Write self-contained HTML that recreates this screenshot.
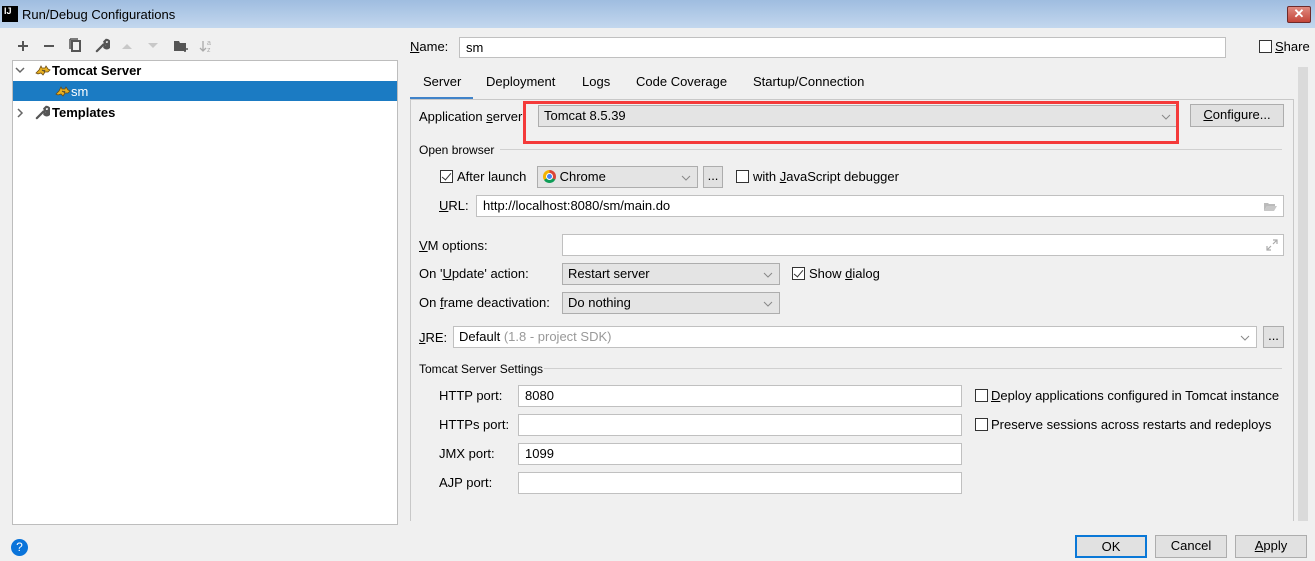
<!DOCTYPE html>
<html><head><style>
*{box-sizing:border-box;margin:0;padding:0}
body{width:1315px;height:561px;background:#f0f0f0;font-family:"Liberation Sans","Noto Sans CJK SC",sans-serif;font-size:13px;color:#000;position:relative;overflow:hidden}
.a{position:absolute}
.t{position:absolute;white-space:nowrap;line-height:16px}
.in{position:absolute;background:#fff;border:1px solid #c0c0c0;height:22px;padding-left:6px;line-height:20px}
.cb{position:absolute;background:#e4e4e4;border:1px solid #adadad;height:22px;padding-left:5px;line-height:20px}
.ar{position:absolute;right:6px;top:8px}
.btn{position:absolute;background:#e1e1e1;border:1px solid #adadad;text-align:center;line-height:20px;height:22px}
.chk{position:absolute;width:13px;height:13px;border:1px solid #333;background:#fff}
.chk.on::after{content:"";position:absolute;left:3px;top:0px;width:4px;height:8px;border:solid #333;border-width:0 1.5px 1.5px 0;transform:rotate(40deg)}
u{text-decoration:underline}
.gray{color:#999}
</style></head><body>
<svg width="0" height="0" style="position:absolute"><defs>
<symbol id="dd" viewBox="0 0 10 6"><path d="M1 1l4 4 4-4" fill="none" stroke="#888" stroke-width="1"/></symbol>
<symbol id="cat" viewBox="0 0 16 12"><path d="M1 9l3-3 2-4 1 2h3l1-2 2 3 2 1-2 2-3 0-2 3-2-2-3 1z" fill="#e8b020" stroke="#6b4a10" stroke-width=".8"/><path d="M7 6l2 1M10 6l-1 2" stroke="#333" stroke-width=".8"/></symbol>
<symbol id="wr" viewBox="0 0 16 16"><path d="M2 14l7-7M9 7a3.5 3.5 0 1 0 3-5l-2 2 1 2 2 1 2-2a3.5 3.5 0 0 1-5 5" fill="none" stroke="#555" stroke-width="2.4" stroke-linecap="round"/></symbol>
</defs></svg>
<div class="a" style="left:0;top:0;width:1315px;height:28px;background:linear-gradient(#9fbde0,#c3d7ee)"></div>
<div class="a" style="left:2px;top:6px;width:16px;height:16px;background:#000;color:#fff;font-size:9px;font-weight:bold;line-height:10px;padding-left:2px">IJ</div>
<div class="t" style="left:22px;top:7px;font-size:13px">Run/Debug Configurations</div>
<div class="a" style="left:1287px;top:6px;width:24px;height:17px;background:linear-gradient(#e08a80,#c4463a);border:1px solid #6e2a2a;border-radius:2px;color:#fff;font-weight:bold;text-align:center;line-height:14px;font-size:13px">✕</div>

<svg class="a" style="left:0;top:36px" width="220" height="20">
<path d="M18 10h10M23 5v10" stroke="#555" stroke-width="2"/>
<path d="M44 10h10" stroke="#555" stroke-width="2"/>
<rect x="72" y="5" width="8" height="10" fill="none" stroke="#555" stroke-width="2"/><path d="M70 3h8M70 3v10" stroke="#555" stroke-width="1.5"/>
<use href="#wr" x="95" y="2" width="15" height="15"/>
<path d="M122 13l5-5 5 5z" fill="#c8c8c8"/>
<path d="M148 7l5 5 5-5z" fill="#c8c8c8"/>
<path d="M174 5h5l1 2h6v8h-12z" fill="#555"/><path d="M182 13h6M185 10v6" stroke="#555" stroke-width="1.6"/>
<path d="M203 5v10M200 12l3 3 3-3" fill="none" stroke="#aaa" stroke-width="1.3"/><text x="207" y="9" font-size="7" fill="#aaa">a</text><text x="207" y="16" font-size="7" fill="#aaa">z</text>
</svg>

<div class="a" style="left:12px;top:60px;width:386px;height:465px;background:#fff;border:1px solid #bdbdbd"></div>
<div class="a" style="left:13px;top:81px;width:384px;height:20px;background:#1b7bc3"></div>
<svg class="a" style="left:15px;top:67px" width="10" height="7"><path d="M1 1l4 4 4-4" fill="none" stroke="#666" stroke-width="1.5"/></svg>
<svg class="a" style="left:35px;top:64px" width="16" height="12"><use href="#cat"/></svg>
<div class="t" style="left:52px;top:63px;font-weight:bold">Tomcat Server</div>
<svg class="a" style="left:55px;top:85px" width="16" height="12"><use href="#cat"/></svg>
<div class="t" style="left:71px;top:84px;color:#fff">sm</div>
<svg class="a" style="left:17px;top:108px" width="7" height="10"><path d="M1 1l4 4-4 4" fill="none" stroke="#666" stroke-width="1.5"/></svg>
<svg class="a" style="left:35px;top:105px" width="15" height="15"><use href="#wr"/></svg>
<div class="t" style="left:52px;top:105px;font-weight:bold">Templates</div>
<div class="a" style="left:11px;top:539px;width:17px;height:17px;border-radius:50%;background:#0a74da;color:#fff;text-align:center;font-size:12px;line-height:17px">?</div>

<div class="t" style="left:410px;top:39px"><u>N</u>ame:</div>
<div class="in" style="left:459px;top:37px;width:767px;height:21px;line-height:19px">sm</div>
<div class="chk" style="left:1259px;top:40px"></div>
<div class="t" style="left:1275px;top:39px"><u>S</u>hare</div>

<div class="t" style="left:423px;top:74px">Server</div>
<div class="t" style="left:486px;top:74px">Deployment</div>
<div class="t" style="left:582px;top:74px">Logs</div>
<div class="t" style="left:636px;top:74px">Code Coverage</div>
<div class="t" style="left:753px;top:74px">Startup/Connection</div>
<div class="a" style="left:410px;top:97px;width:63px;height:3px;background:#4083c9"></div>
<div class="a" style="left:410px;top:99px;width:884px;height:422px;border-left:1px solid #c8c8c8;border-top:1px solid #c8c8c8;border-right:1px solid #c8c8c8"></div>
<div class="a" style="left:1298px;top:67px;width:10px;height:454px;background:#dadada"></div>

<div class="t" style="left:419px;top:109px">Application <u>s</u>erver:</div>
<div class="cb" style="left:538px;top:105px;width:640px">Tomcat 8.5.39<svg class="ar" width="10" height="6"><use href="#dd"/></svg></div>
<div class="a" style="left:523px;top:101px;width:656px;height:43px;border:3px solid #f43a3a"></div>
<div class="btn" style="left:1190px;top:104px;width:94px;height:23px"><u>C</u>onfigure...</div>

<div class="t" style="left:419px;top:142px;font-size:12px">Open browser</div>
<div class="a" style="left:500px;top:149px;width:782px;height:1px;background:#d0d0d0"></div>
<div class="chk on" style="left:440px;top:170px"></div>
<div class="t" style="left:457px;top:169px">After launch</div>
<div class="cb" style="left:537px;top:166px;width:161px"><span style="display:inline-block;width:13px;height:13px;border-radius:50%;background:conic-gradient(#db4437 0 33%,#0f9d58 0 66%,#f4b400 0);vertical-align:-2px;position:relative"><span style="position:absolute;left:3px;top:3px;width:7px;height:7px;border-radius:50%;background:#4285f4;border:1px solid #fff"></span></span> Chrome<svg class="ar" width="10" height="6"><use href="#dd"/></svg></div>
<div class="btn" style="left:703px;top:166px;width:20px;line-height:18px">...</div>
<div class="chk" style="left:736px;top:170px"></div>
<div class="t" style="left:753px;top:169px">with <u>J</u>avaScript debugger</div>
<div class="t" style="left:439px;top:198px"><u>U</u>RL:</div>
<div class="in" style="left:476px;top:195px;width:808px">http://localhost:8080/sm/main.do<svg class="a" style="right:5px;top:5px" width="15" height="11"><path d="M1 2h4l1 1h6v2H4L1 10z" fill="#bbb"/><path d="M4 5h10l-3 5H1z" fill="#c8c8c8"/></svg></div>

<div class="t" style="left:419px;top:238px"><u>V</u>M options:</div>
<div class="in" style="left:562px;top:234px;width:722px"><svg class="a" style="right:5px;top:4px" width="12" height="12"><path d="M7 1h4v4M11 1L7 5M5 11H1V7M1 11l4-4" fill="none" stroke="#aaa" stroke-width="1.2"/></svg></div>
<div class="t" style="left:419px;top:266px">On '<u>U</u>pdate' action:</div>
<div class="cb" style="left:562px;top:263px;width:218px">Restart server<svg class="ar" width="10" height="6"><use href="#dd"/></svg></div>
<div class="chk on" style="left:792px;top:267px"></div>
<div class="t" style="left:809px;top:266px">Show <u>d</u>ialog</div>
<div class="t" style="left:419px;top:295px">On <u>f</u>rame deactivation:</div>
<div class="cb" style="left:562px;top:292px;width:218px">Do nothing<svg class="ar" width="10" height="6"><use href="#dd"/></svg></div>

<div class="t" style="left:419px;top:330px"><u>J</u>RE:</div>
<div class="in" style="left:453px;top:326px;width:804px;padding-left:5px">Default <span class="gray">(1.8 - project SDK)</span><svg class="ar" width="10" height="6"><use href="#dd"/></svg></div>
<div class="btn" style="left:1263px;top:326px;width:21px;line-height:18px">...</div>

<div class="t" style="left:419px;top:361px;font-size:12px">Tomcat Server Settings</div>
<div class="a" style="left:544px;top:368px;width:738px;height:1px;background:#d0d0d0"></div>
<div class="t" style="left:439px;top:388px">HTTP port:</div>
<div class="in" style="left:518px;top:385px;width:444px">8080</div>
<div class="t" style="left:439px;top:417px">HTTPs port:</div>
<div class="in" style="left:518px;top:414px;width:444px"></div>
<div class="t" style="left:439px;top:446px">JMX port:</div>
<div class="in" style="left:518px;top:443px;width:444px">1099</div>
<div class="t" style="left:439px;top:475px">AJP port:</div>
<div class="in" style="left:518px;top:472px;width:444px"></div>
<div class="chk" style="left:975px;top:389px"></div>
<div class="t" style="left:991px;top:388px"><u>D</u>eploy applications configured in Tomcat instance</div>
<div class="chk" style="left:975px;top:418px"></div>
<div class="t" style="left:991px;top:417px">Preserve sessions across restarts and redeploys</div>

<div class="btn" style="left:1075px;top:535px;width:72px;height:23px;border:2px solid #0a78d7;line-height:19px">OK</div>
<div class="btn" style="left:1155px;top:535px;width:72px;height:23px">Cancel</div>
<div class="btn" style="left:1235px;top:535px;width:72px;height:23px"><u>A</u>pply</div>
</body></html>
